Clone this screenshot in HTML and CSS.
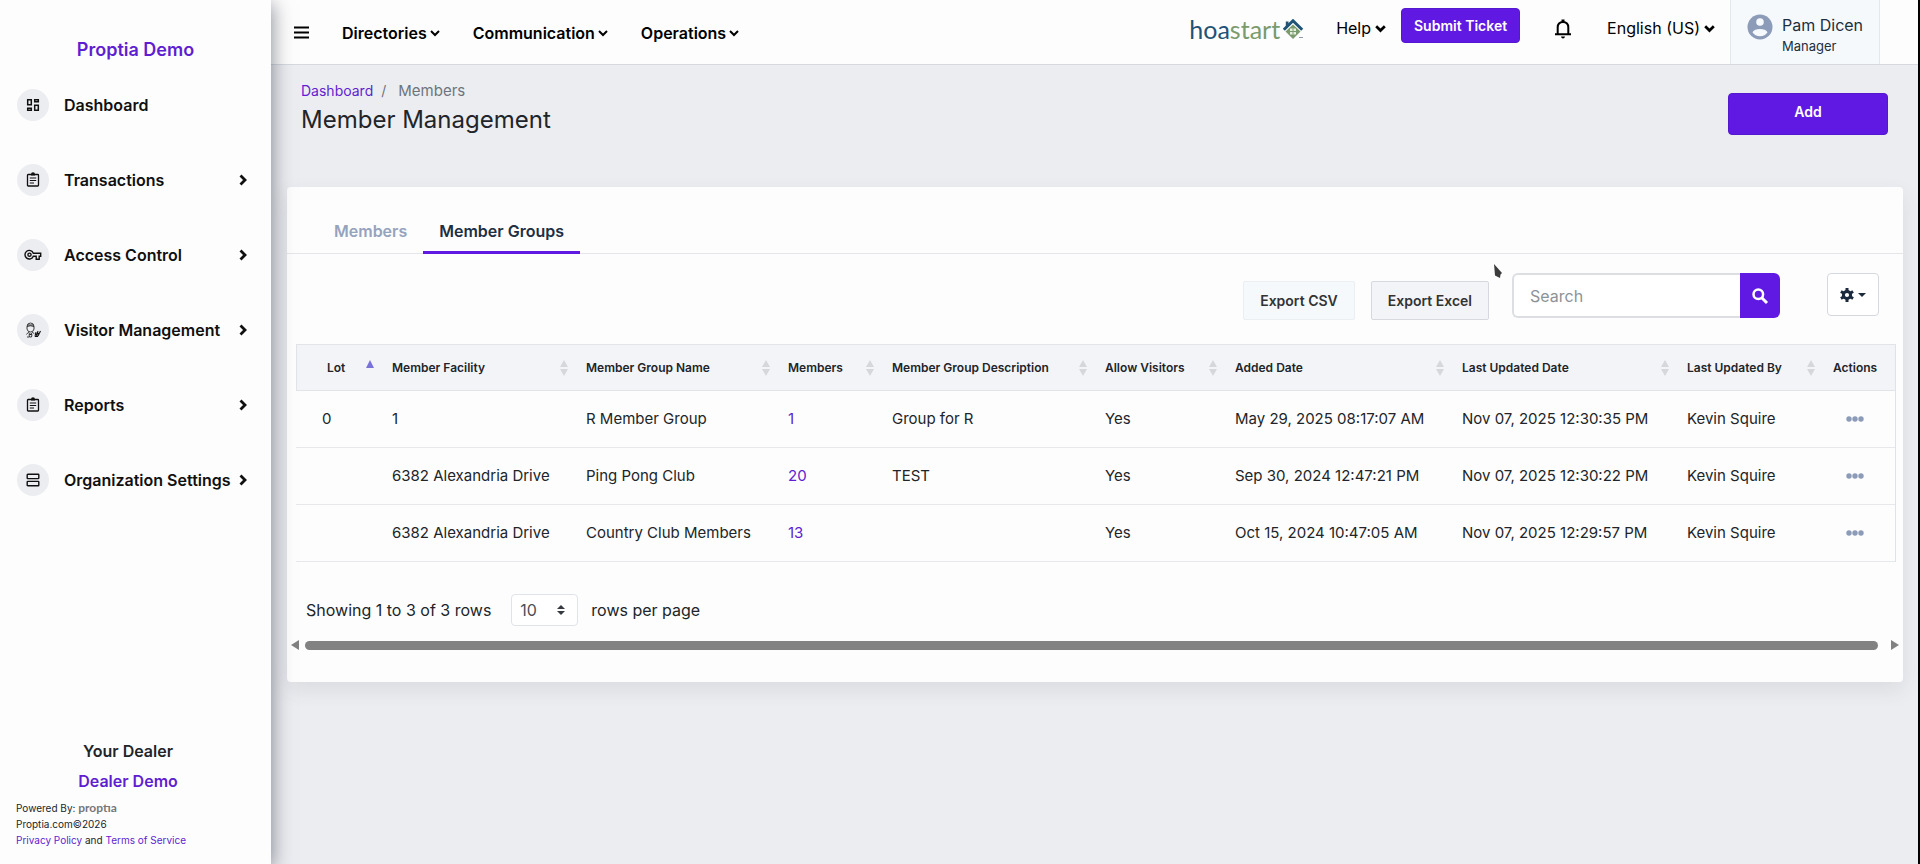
FILE: index.html
```html
<!DOCTYPE html>
<html lang="en">
<head>
<meta charset="utf-8">
<title>Member Management</title>
<link rel="stylesheet" href="styles.css">
</head>
<body>
<svg class="defs" width="0" height="0" aria-hidden="true">
  <symbol id="chev-down" viewBox="0 0 10 8"><path d="M1 2l4 4 4-4" fill="none" stroke="currentColor" stroke-width="2"/></symbol>
  <symbol id="chev-down-bold" viewBox="0 0 11 9"><path d="M1.200 2.200l4.300 4.300 4.300-4.300" fill="none" stroke="currentColor" stroke-width="2.700"/></symbol>
  <symbol id="chev-right" viewBox="0 0 8 12"><path d="M1.500 1.500L6 6l-4.500 4.500" fill="none" stroke="currentColor" stroke-width="2.800"/></symbol>
  <symbol id="clipboard" viewBox="0 0 16 16"><path d="M3.200 2.500h9.600q.7 0 .7.700v10.100q0 .7-.7.700H3.200q-.7 0-.7-.7V3.200q0-.7.7-.7z" fill="none" stroke="currentColor" stroke-width="1.300"/><path d="M6 2.200a2 2 0 0 1 4 0v1.300H6z" fill="currentColor"/><path d="M4.800 6h6.400M4.800 8.500h6.400M4.800 11h4.200" stroke="currentColor" stroke-width="1.200"/></symbol>
  <symbol id="sort" viewBox="0 0 8 16"><path d="M4 0l4 7H0zM4 16l4-7H0z" fill="currentColor"/></symbol>
  <symbol id="dots" viewBox="0 0 18 6"><circle cx="3" cy="3" r="2.700" fill="currentColor"/><circle cx="9" cy="3" r="2.700" fill="currentColor"/><circle cx="15" cy="3" r="2.700" fill="currentColor"/></symbol>
</svg>
<div class="app">
  <aside class="sidebar">
    <a class="brand" href="#">Proptia Demo</a>
    <nav class="side-nav">
      <a class="side-link" href="#"><span class="side-icon"><svg width="16" height="16" viewBox="0 0 16 16" fill="none" stroke="currentColor" stroke-width="1.500"><path d="M2.700 2.700h3.600v5H2.700zM9.700 2.700h3.600v2H9.700zM9.700 8.300h3.600v5H9.700zM2.700 11.300h3.600v2H2.700z"/></svg></span><span class="side-text">Dashboard</span></a>
      <a class="side-link" href="#"><span class="side-icon"><svg width="16" height="16"><use href="#clipboard"/></svg></span><span class="side-text">Transactions</span><svg class="chev" width="8" height="12"><use href="#chev-right"/></svg></a>
      <a class="side-link" href="#"><span class="side-icon"><svg width="18" height="12" viewBox="0 0 18 12" fill="none" stroke="currentColor" stroke-width="1.400"><path d="M9.300 4.200h7.400v3h-1.500v3h-3v-3H9.300A4.300 4.300 0 1 1 9.300 4.200z"/><circle cx="5.500" cy="5.700" r="1.600"/></svg></span><span class="side-text">Access Control</span><svg class="chev" width="8" height="12"><use href="#chev-right"/></svg></a>
      <a class="side-link" href="#"><span class="side-icon"><svg width="16" height="16" viewBox="0 0 16 16" fill="none" stroke="currentColor" stroke-width=".8"><path d="M2 4.500Q2.200 1 5.500 1T9 4.500V7Q8.500 10 5.500 10T2 7zM2 4.500q3.500-1.500 7 0M2.500 3h6M1.500 12.500Q2 11 4 10.500l1.500 2L7.300 10.500l2 1M4 12.500h3L6.500 15h-2zM2 15h2"/><path d="M10 14.500l1-4.500M11.500 14.500l1.500-5.500M13 14l2.500-5M10 12.500l5-1.500M10 14.500h3" stroke-width="1.100"/></svg></span><span class="side-text">Visitor Management</span><svg class="chev" width="8" height="12"><use href="#chev-right"/></svg></a>
      <a class="side-link" href="#"><span class="side-icon"><svg width="16" height="16"><use href="#clipboard"/></svg></span><span class="side-text">Reports</span><svg class="chev" width="8" height="12"><use href="#chev-right"/></svg></a>
      <a class="side-link" href="#"><span class="side-icon"><svg width="16" height="16" viewBox="0 0 16 16" fill="none" stroke="currentColor" stroke-width="1.400"><rect x="2.200" y="2.200" width="11.600" height="4.400" rx=".6"/><rect x="2.200" y="9.400" width="11.600" height="4.400" rx=".6"/></svg></span><span class="side-text">Organization Settings</span><svg class="chev" width="8" height="12"><use href="#chev-right"/></svg></a>
    </nav>
    <footer class="side-foot">
      <div class="dealer">Your Dealer<a href="#">Dealer Demo</a></div>
      <div class="legal">Powered By: <span class="proptia">proptıa</span><br>Proptia.com©2026<br><a href="#">Privacy Policy</a> and <a href="#">Terms of Service</a></div>
    </footer>
  </aside>

  <div class="content">
    <header class="topbar">
      <button class="icon-btn menu-btn" aria-label="Toggle menu"><svg width="15" height="13" viewBox="0 0 15 13"><path d="M0 1.500h15M0 6.500h15M0 11.500h15" stroke="currentColor" stroke-width="2"/></svg></button>
      <nav class="top-nav">
        <a href="#">Directories<svg width="10" height="8"><use href="#chev-down"/></svg></a>
        <a href="#">Communication<svg width="10" height="8"><use href="#chev-down"/></svg></a>
        <a href="#">Operations<svg width="10" height="8"><use href="#chev-down"/></svg></a>
      </nav>
      <div class="top-right">
        <a class="hoa" href="#"><span class="hoa-text">hoa<span>start</span></span><svg width="22" height="20" viewBox="0 0 22 20"><path d="M10 5.500l7.500 7L10 20l-7.500-7.500z" fill="#7b9a6d"/><path d="M.8 10.800L10 1.800l9.200 9" fill="none" stroke="#1f5377" stroke-width="3"/><path d="M2.800 2.500h2.700v4l-2.700 2.500z" fill="#1f5377"/><path d="M7 9.500h6v6H7z" fill="#e6eee0"/><path d="M10 9.500v6M7 12.500h6" stroke="#7b9a6d"/><path d="M16 18.500h4" stroke="#8d9aa5"/></svg></a>
        <a class="help" href="#">Help<svg width="11" height="9"><use href="#chev-down-bold"/></svg></a>
        <button class="btn ticket">Submit Ticket</button>
        <button class="icon-btn bell" aria-label="Notifications"><svg width="18" height="22" viewBox="0 0 18 22"><path d="M3.700 16V9.500Q3.700 4 9 4t5.300 5.500V16M1 16.200h16" fill="none" stroke="currentColor" stroke-width="2"/><path d="M7.500 1.500h3V4h-3zM7 18.500h4Q10.700 20.600 9 20.600T7 18.500z" fill="currentColor"/></svg></button>
        <a class="lang" href="#">English (US)<svg width="11" height="9"><use href="#chev-down-bold"/></svg></a>
        <a class="user" href="#">
          <svg width="26" height="26" viewBox="0 0 26 26"><circle cx="13" cy="13" r="12.500" fill="#8c9bb8"/><circle cx="13" cy="8" r="3.800" fill="#f5f9fc"/><path d="M5.500 18.200q2-3.200 7.500-3.200t7.500 3.200q-2.500 4-7.500 4t-7.500-4z" fill="#f5f9fc"/></svg>
          <span class="user-name">Pam Dicen<small>Manager</small></span>
        </a>
      </div>
    </header>

    <main>
      <div class="page-head">
        <div>
          <nav class="crumbs"><a href="#">Dashboard</a><span class="slash">/</span><span class="here">Members</span></nav>
          <h1>Member Management</h1>
        </div>
        <button class="btn add">Add</button>
      </div>

      <section class="card">
        <nav class="tabs"><a href="#">Members</a><a class="active" href="#">Member Groups</a></nav>
        <div class="toolbar">
          <button class="export">Export CSV</button>
          <button class="export pressed">Export Excel<svg class="pointer" width="10" height="16" viewBox="0 0 10 16"><path d="M1 1l8 9-1.500 1.500L7 15l-5-2.500z" fill="#3c3c3c"/></svg></button>
          <form class="search"><input type="text" placeholder="Search" aria-label="Search"><button type="button" aria-label="Run search"><svg width="18" height="18" viewBox="0 0 18 18" fill="none" stroke="currentColor"><circle cx="7.300" cy="7.300" r="4.800" stroke-width="2.500"/><path d="M11 11l5 5" stroke-width="3"/></svg></button></form>
          <button class="gear" aria-label="Columns"><svg width="14" height="14" viewBox="0 0 14 14"><circle cx="7" cy="7" r="3.600" fill="none" stroke="currentColor" stroke-width="3"/><path d="M7 0v3M7 11v3M.9 3.500l2.600 1.500M10.500 9l2.600 1.500M.9 10.500L3.500 9M10.500 5l2.600-1.500" stroke="currentColor" stroke-width="3"/></svg><svg width="8" height="4" viewBox="0 0 8 4"><path d="M0 0h8L4 4z" fill="currentColor"/></svg></button>
        </div>

        <div class="table-wrap">
          <table>
            <colgroup><col class="c1"><col class="c2"><col class="c3"><col class="c4"><col class="c5"><col class="c6"><col class="c7"><col class="c8"><col class="c9"><col class="c10"></colgroup>
            <thead><tr>
              <th><div class="th">Lot<svg class="asc" width="8" height="16" viewBox="0 0 8 16"><path d="M4 0l4 8H0z" fill="currentColor"/></svg></div></th>
              <th><div class="th">Member Facility<svg width="8" height="16"><use href="#sort"/></svg></div></th>
              <th><div class="th">Member Group Name<svg width="8" height="16"><use href="#sort"/></svg></div></th>
              <th><div class="th">Members<svg width="8" height="16"><use href="#sort"/></svg></div></th>
              <th><div class="th">Member Group Description<svg width="8" height="16"><use href="#sort"/></svg></div></th>
              <th><div class="th">Allow Visitors<svg width="8" height="16"><use href="#sort"/></svg></div></th>
              <th><div class="th">Added Date<svg width="8" height="16"><use href="#sort"/></svg></div></th>
              <th><div class="th">Last Updated Date<svg width="8" height="16"><use href="#sort"/></svg></div></th>
              <th><div class="th">Last Updated By<svg width="8" height="16"><use href="#sort"/></svg></div></th>
              <th>Actions</th>
            </tr></thead>
            <tbody>
              <tr><td>0</td><td>1</td><td>R Member Group</td><td><a href="#">1</a></td><td>Group for R</td><td>Yes</td><td>May 29, 2025 08:17:07 AM</td><td>Nov 07, 2025 12:30:35 PM</td><td>Kevin Squire</td><td><button class="icon-btn more" aria-label="Row actions"><svg width="18" height="6"><use href="#dots"/></svg></button></td></tr>
              <tr><td></td><td>6382 Alexandria Drive</td><td>Ping Pong Club</td><td><a href="#">20</a></td><td>TEST</td><td>Yes</td><td>Sep 30, 2024 12:47:21 PM</td><td>Nov 07, 2025 12:30:22 PM</td><td>Kevin Squire</td><td><button class="icon-btn more" aria-label="Row actions"><svg width="18" height="6"><use href="#dots"/></svg></button></td></tr>
              <tr><td></td><td>6382 Alexandria Drive</td><td>Country Club Members</td><td><a href="#">13</a></td><td></td><td>Yes</td><td>Oct 15, 2024 10:47:05 AM</td><td>Nov 07, 2025 12:29:57 PM</td><td>Kevin Squire</td><td><button class="icon-btn more" aria-label="Row actions"><svg width="18" height="6"><use href="#dots"/></svg></button></td></tr>
            </tbody>
          </table>
        </div>

        <div class="pager">
          <span>Showing 1 to 3 of 3 rows</span>
          <span class="select-wrap"><select id="page-size"><option>10</option><option>25</option><option>50</option></select><svg width="8" height="10" viewBox="0 0 8 10"><path d="M4 0l4 4H0zM4 10l4-4H0z" fill="#343a40"/></svg></span>
          <label for="page-size">rows per page</label>
        </div>
        <div class="scroller" aria-hidden="true">
          <svg width="8" height="10" viewBox="0 0 8 10"><path d="M0 5l8-5v10z" fill="#828282"/></svg>
          <span class="thumb"></span>
          <svg width="8" height="10" viewBox="0 0 8 10"><path d="M8 5L0 0v10z" fill="#828282"/></svg>
        </div>
      </section>
    </main>
  </div>
</div>
</body>
</html>
```
FILE: styles.css
```css
* { box-sizing: border-box; }
body {
  margin: 0;
  background: #ecedf1;
  border-right: 2px solid #000;
  font: 16px/24px Inter, "Open Sans", sans-serif;
  color: #212529;
}
a { color: #5f1ed0; text-decoration: none; }
button, input, select { font: inherit; color: inherit; }
button { cursor: pointer; }
svg { display: block; flex: none; }
.defs { position: absolute; }
.app { display: flex; min-height: 100vh; }

.sidebar {
  position: relative;
  z-index: 1;
  display: flex;
  flex-direction: column;
  flex: 0 0 271px;
  background: #fdfdfd;
  box-shadow: 2px 4px 18px rgba(40, 45, 60, .5);
}
.brand { margin-top: 38px; text-align: center; font-size: 18px; font-weight: 600; }
.side-nav { display: flex; flex-direction: column; gap: 43px; margin-top: 27px; padding: 0 24px 0 17px; }
.side-link { display: flex; align-items: center; color: #101010; font-weight: 600; height: 32px; }
.side-icon { display: grid; place-items: center; width: 32px; height: 32px; margin-right: 15px; border-radius: 50%; background: #ecedf1; }
.side-text { flex: 1; white-space: nowrap; }
.side-foot { margin-top: auto; padding: 0 16px 16px; }
.dealer { display: flex; flex-direction: column; align-items: center; padding-right: 15px; font-weight: 600; line-height: 30px; }
.legal { margin-top: 4px; font-size: 10px; line-height: 16px; }
.proptia { font-family: Lato, sans-serif; font-size: 12px; font-weight: 700; line-height: 12px; color: #777; }

.content { flex: 1; min-width: 0; }
.topbar {
  display: flex;
  align-items: stretch;
  height: 65px;
  padding-right: 38px;
  background: #fdfdfd;
  border-bottom: 1px solid #d6dae0;
  color: #000;
}
.topbar a { color: inherit; }
.icon-btn { display: flex; align-items: center; padding: 0; border: 0; background: none; }
.menu-btn { margin-left: 23px; }
.top-nav { display: flex; align-items: center; gap: 33px; margin: 2px 0 0 33px; font-weight: 600; }
.top-nav a { display: flex; align-items: center; gap: 3px; }
.help, .lang { display: flex; align-items: center; gap: 4px; }
.top-right { display: flex; align-items: flex-start; margin-left: auto; white-space: nowrap; }
.hoa { display: flex; align-items: center; gap: 3px; margin-top: 17px; }
.hoa-text { font: 400 25px/24px Lato, sans-serif; color: #1f5377; }
.hoa-text span { color: #7b9a6d; }
.help { margin: 16px 15px 0 31px; }
.btn { border: 1px solid #5418cf; border-radius: 4px; background: #5f19e3; color: #fff; font-size: 14px; font-weight: 600; }
.ticket { height: 35px; margin-top: 8px; padding: 0 12px; }
.bell { margin: 18px 35px 0 34px; }
.lang { margin: 16px 15px 0 0; }
.user { display: flex; align-self: stretch; gap: 9px; width: 150px; padding: 14px 0 0 16px; border: solid #e2e8ee; border-width: 0 1px; background: #f5f9fc; }
.topbar .user { color: #212f3d; }
.user-name { display: flex; flex-direction: column; line-height: 22px; }
.user-name small { font-size: 13px; line-height: 20px; }

.page-head { display: flex; justify-content: space-between; align-items: flex-start; padding: 14px 30px 0; }
.crumbs { display: flex; gap: 8px; font-size: 14px; color: #6c757d; }
.slash { margin-right: 4px; }
.here { font-size: 15px; }
h1 { margin: 0; font-size: 24px; line-height: 34px; font-weight: 400; }
.add { width: 160px; height: 42px; margin-top: 14px; padding: 0 0 4px; }

.card { margin: 50px 15px 0 16px; padding-bottom: 32px; border-radius: 4px; background: #fdfdfd; box-shadow: 0 8px 20px rgba(60, 65, 80, .1); }
.tabs { display: flex; padding: 27px 31px 0; border-bottom: 1px solid #e4e6ea; }
.tabs a { padding: 5px 16px 8px; margin-bottom: -1px; border-bottom: 3px solid transparent; color: #95a3bd; font-weight: 600; line-height: 24px; }
.tabs .active { border-color: #5f19e3; color: #212f44; }
.toolbar { display: flex; justify-content: flex-end; align-items: flex-start; padding: 19px 24px 24px 0; }
.export { position: relative; height: 39px; margin: 8px 16px 0 0; padding: 0 16px; border: 1px solid #eaeff4; background: #f5f9fc; border-radius: 2px; color: #333; font-size: 14px; font-weight: 600; }
.export.pressed { margin-right: 23px; border-color: #d5d9df; background: #f3f4f8; }
.pointer { position: absolute; top: -19px; right: -15px; }
.search { display: flex; width: 268px; height: 45px; margin: 0 47px 0 0; }
.search input { flex: 1; min-width: 0; padding: 0 16px; border: 2px solid #dcdee2; border-right: 0; border-radius: 6px 0 0 6px; background: #fff; outline: none; }
.search input::placeholder { color: #8c9297; opacity: 1; }
.search button { display: grid; place-items: center; width: 40px; padding: 0; border: 0; border-radius: 0 6px 6px 0; background: #5f19e3; color: #fff; }
.gear { display: flex; align-items: center; justify-content: center; gap: 4px; width: 52px; height: 43px; padding: 0; border: 1px solid #d5d9df; border-radius: 4px; background: #fff; color: #1b2a3d; }

.table-wrap { margin: 0 9px; }
table { width: 100%; table-layout: fixed; border-collapse: separate; border-spacing: 0; border-right: 1px solid #dfe3e8; }
th, td { padding: 0 0 0 12px; text-align: left; white-space: nowrap; }
th { height: 47px; border: solid #e1e5ea; border-width: 1px 0; background: #f3f4f8; font-size: 12px; font-weight: 600; }
th:first-child { padding-left: 30px; border-left-width: 1px; }
td { height: 57px; border-bottom: 1px solid #e6e8ec; font-size: 15px; }
td:first-child { padding-left: 26px; }
.th { display: flex; justify-content: space-between; align-items: center; padding-right: 6px; }
.th svg { color: #d5d7da; }
.th .asc { color: #7a72da; }
.more { margin: 0 auto; color: #8c9bb8; }
td:last-child { padding: 0 6px 0 0; }
.c1 { width: 84px; }
.c2 { width: 194px; }
.c3 { width: 202px; }
.c4 { width: 104px; }
.c5 { width: 213px; }
.c6 { width: 130px; }
.c7 { width: 227px; }
.c8 { width: 225px; }
.c9 { width: 146px; }
.c10 { width: 74px; }

.pager { display: flex; align-items: center; margin: 32px 0 0 19px; }
.select-wrap { position: relative; margin: 0 13px 0 20px; }
.select-wrap select { display: block; appearance: none; width: 67px; height: 32px; padding: 0 8px; border: 1px solid #e0e3e8; border-radius: 4px; background: #fff; color: #495057; }
.select-wrap svg { position: absolute; right: 13px; top: 11px; pointer-events: none; }
.scroller { display: flex; align-items: center; gap: 6px; margin: 14px 4px 0 4px; }
.thumb { flex: 1; height: 9px; margin-right: 7px; border-radius: 5px; background: #828282; }
```
